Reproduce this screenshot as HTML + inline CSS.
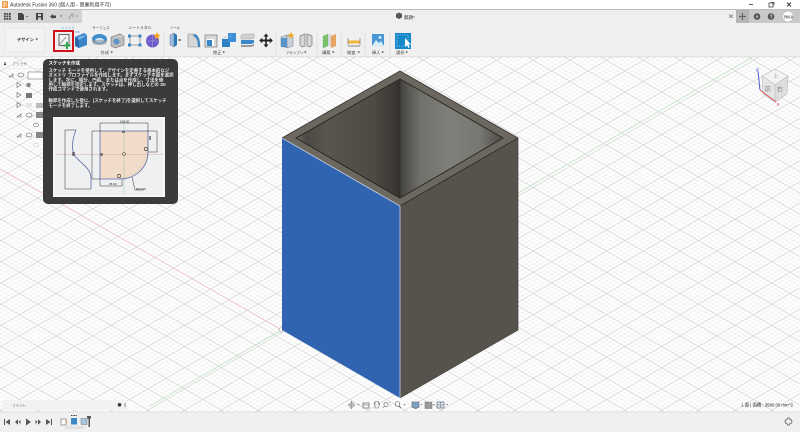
<!DOCTYPE html>
<html lang="ja">
<head>
<meta charset="utf-8">
<title>Autodesk Fusion 360</title>
<style>
html,body{margin:0;padding:0;width:800px;height:432px;overflow:hidden;background:#fff}
svg{display:block;filter:blur(.3px)}
text{font-family:"Liberation Sans","Noto Sans CJK JP",sans-serif;fill:#444}
</style>
</head>
<body>
<svg width="800" height="432" viewBox="0 0 800 432" xmlns="http://www.w3.org/2000/svg">
<defs>
<pattern id="mn" width="7.34" height="4.24" patternUnits="userSpaceOnUse" patternTransform="translate(588.3 261.7)">
<path d="M0 0L7.34 4.24M0 4.24L7.34 0" stroke="#eeeeee" stroke-width=".6" fill="none"/>
</pattern>
<pattern id="mj" width="36.7" height="21.2" patternUnits="userSpaceOnUse" patternTransform="translate(588.3 261.7)">
<path d="M0 0L36.7 21.2M0 21.2L36.7 0" stroke="#d2d2d2" stroke-width=".7" fill="none"/>
</pattern>
<linearGradient id="lw" x1="296" x2="400" y1="0" y2="0" gradientUnits="userSpaceOnUse">
<stop offset="0" stop-color="#6d6b65"/><stop offset=".1" stop-color="#4a4843"/><stop offset=".3" stop-color="#5a564e"/><stop offset=".75" stop-color="#4d4a44"/><stop offset="1" stop-color="#36332f"/>
</linearGradient>
<linearGradient id="rw" x1="400" x2="503" y1="0" y2="0" gradientUnits="userSpaceOnUse">
<stop offset="0" stop-color="#45433f"/><stop offset=".2" stop-color="#71716b"/><stop offset=".5" stop-color="#80807a"/><stop offset=".78" stop-color="#777771"/><stop offset=".95" stop-color="#55534e"/><stop offset="1" stop-color="#5a5852"/>
</linearGradient>
</defs>

<!-- canvas -->
<rect width="800" height="432" fill="#fff"/>
<rect y="57" width="800" height="355" fill="url(#mn)"/>
<rect y="57" width="800" height="355" fill="url(#mj)"/>
<path d="M0 169L282 330" stroke="#ecbcbc" stroke-width=".8"/>
<path d="M753 57L282 330L150 406" stroke="#c6e8c6" stroke-width=".8"/>
<rect x="279.500" y="327.500" width="4" height="4" fill="#fff" stroke="#aaa" stroke-width=".6" transform="rotate(45 281.500 329.500)"/>

<!-- box -->
<polygon points="282,138 400,206 400,398 282,330" fill="#3164b0"/>
<polygon points="518,138 518,330 400,398 400,206" fill="#56534c"/>
<polygon points="400,71 518,138 400,206 282,138" fill="#6c685f"/>
<polygon points="400,79 296,138 400,198" fill="url(#lw)"/>
<polygon points="400,79 503,138 400,198" fill="url(#rw)"/>
<path d="M400 79L296 138L400 198L503 138Z" fill="none" stroke="#25231f" stroke-width=".9"/>
<path d="M400 79V198" stroke="#2c2a27" stroke-width=".8"/>
<path d="M282 138L400 71L518 138" fill="none" stroke="#3a3833" stroke-width=".9"/>
<path d="M400 206L518 138" stroke="#2d2b27" stroke-width=".8"/>
<path d="M282 138L400 206V398" fill="none" stroke="#b8c6dc" stroke-width=".9"/>
<path d="M518 138V330L400 398" fill="none" stroke="#44413b" stroke-width=".7"/>

<!-- title bar -->
<rect width="800" height="9" fill="#fff"/>
<rect x="2" y="1" width="6" height="7" fill="#f29b45"/>
<text x="3.200" y="6.800" font-size="6" font-weight="700" style="fill:#fff">F</text>
<text x="10" y="6.500" font-size="5" style="fill:#333">Autodesk Fusion 360 (個人用 - 商業利用不可)</text>
<path d="M749 4.500H753" stroke="#444" stroke-width=".9"/>
<rect x="769" y="3" width="4" height="4" fill="none" stroke="#444" stroke-width=".8"/>
<path d="M771 2.300H774V5.300" fill="none" stroke="#444" stroke-width=".7"/>
<path d="M787 2.500L791 6.500M791 2.500L787 6.500" stroke="#333" stroke-width=".9"/>
<rect y="9" width="800" height="1.200" fill="#bdbdbd"/>

<!-- qat -->
<rect y="10" width="800" height="13" fill="#efefef"/>
<rect y="10" width="82" height="13" fill="#d3d3d3"/>
<rect x="736" y="10" width="64" height="13" fill="#c9c9c9"/>
<rect x="736" y="10" width="13" height="13" fill="#b5b5b5"/>
<g fill="#444">
<rect x="4" y="13" width="1.800" height="1.800"/><rect x="6.500" y="13" width="1.800" height="1.800"/><rect x="9" y="13" width="1.800" height="1.800"/>
<rect x="4" y="15.500" width="1.800" height="1.800"/><rect x="6.500" y="15.500" width="1.800" height="1.800"/><rect x="9" y="15.500" width="1.800" height="1.800"/>
<rect x="4" y="18" width="1.800" height="1.800"/><rect x="6.500" y="18" width="1.800" height="1.800"/><rect x="9" y="18" width="1.800" height="1.800"/>
<path d="M18 13h4l2 2v5h-6z"/><path d="M26 16l2 0-1 1.500z"/>
<path d="M36 13h7v7h-7z"/>
<path d="M50 16.500l3-2.500v1.500h3v2.500h-3v1z"/><path d="M60 15.500l2 0-1 1.500z"/>
</g>
<rect x="38" y="14" width="3" height="2" fill="#d3d3d3"/><rect x="38" y="17.500" width="3" height="2.500" fill="#d3d3d3"/>
<path d="M76 15.500l2 0-1 1.500z" fill="#888"/>
<path d="M69 19l1-2.500 2-2.500 1 0v3" stroke="#999" fill="none" stroke-width="1"/>

<!-- doc title -->
<path d="M396 14l3-1.500 3 1.500v3.500l-3 1.500-3-1.500z" fill="#555"/>
<text x="404" y="19" font-size="4.500" style="fill:#333">無題*</text>
<path d="M729 14.500l4 3.500M733 14.500l-4 3.500" stroke="#666" stroke-width=".7"/>
<path d="M742.500 13v7M739 16.500h7" stroke="#666" stroke-width="1.200"/>
<circle cx="757" cy="16.500" r="3.300" fill="#555"/><circle cx="757" cy="16.500" r="1.300" fill="#aaa"/>
<circle cx="771" cy="16.500" r="3.300" fill="#555"/><text x="769.700" y="18.500" font-size="5" font-weight="700" style="fill:#ddd">?</text>
<circle cx="788" cy="16.500" r="5" fill="#fff"/><text x="784.300" y="18.300" font-size="4.200" font-weight="700" style="fill:#555">RKA</text>

<!-- ribbon -->
<rect y="23" width="800" height="34" fill="#f0f0f0"/>
<rect y="56.500" width="800" height=".8" fill="#d8d8d8"/>
<rect x="5" y="28" width="40" height="24" fill="#f3f3f3" stroke="#e0e0e0" stroke-width=".6"/>
<text x="17" y="41" font-size="4.200" font-weight="700" style="fill:#333">デザイン</text>
<path d="M35.500 38.500h2.600l-1.300 1.800z" fill="#333"/>

<text x="68" y="29" font-size="3.500" text-anchor="middle" style="fill:#3d9bd6">ソリッド</text>
<path d="M75 32H80" stroke="#59a7dc" stroke-width=".8"/>
<text x="101" y="29" font-size="3.500" text-anchor="middle">サーフェス</text>
<text x="140" y="29" font-size="3.900" text-anchor="middle">シートメタル</text>
<text x="175" y="29" font-size="3.500" text-anchor="middle">ツール</text>

<g font-size="4.200">
<text x="100.500" y="54">作成</text><path d="M110.500 51.500h2.400l-1.200 1.700z" fill="#444"/>
<text x="213" y="54">修正</text><path d="M222.500 51.500h2.400l-1.200 1.700z" fill="#444"/>
<text x="286" y="54" font-size="3.500">アセンブリ</text><path d="M304 51.500h2.400l-1.200 1.700z" fill="#444"/>
<text x="322" y="54">構築</text><path d="M332 51.500h2.400l-1.200 1.700z" fill="#444"/>
<text x="347" y="54">検査</text><path d="M357.500 51.500h2.400l-1.200 1.700z" fill="#444"/>
<text x="372" y="54">挿入</text><path d="M381.500 51.500h2.400l-1.200 1.700z" fill="#444"/>
<text x="396" y="54">選択</text><path d="M405.500 51.500h2.400l-1.200 1.700z" fill="#444"/>
</g>
<g stroke="#dcdcdc" stroke-width=".8">
<path d="M164 33V55M276 33V55M317 33V55M341 33V55M365 33V55M390 33V55"/>
</g>

<!-- sketch -->
<rect x="54" y="31" width="19" height="20" fill="#eeeeee" stroke="#d0131b" stroke-width="2"/>
<rect x="59" y="34.500" width="10" height="11" fill="#f3f3f3" stroke="#555" stroke-width=".9"/>
<path d="M60 44l6-7" stroke="#777" stroke-width=".7"/>
<path d="M67 42v7M63.500 45.500h7" stroke="#2fa84a" stroke-width="2"/>

<!-- solid -->
<path d="M75 37l9-4 3 2v10l-8 3-4-2z" fill="#3b84c8"/><path d="M75 37l4 3v8l-4-2z" fill="#2a69a8"/><path d="M79 40l8-5-9 2z" fill="#7db9e8"/>
<!-- surface -->
<ellipse cx="99.500" cy="39" rx="7.500" ry="5" fill="#3e8ed0"/><ellipse cx="99.500" cy="40.500" rx="4.500" ry="2.500" fill="#cfe3f4"/><path d="M92 40v3c2 3 13 3 15 0v-3" fill="#8f8f8f" opacity=".5"/>
<path d="M111 37l9-3 4 2v9l-9 3-4-2z" fill="#bdbdbd" stroke="#777" stroke-width=".6"/><circle cx="116.500" cy="41.500" r="3" fill="#5b95c8"/><path d="M115 37.500l9-2" stroke="#eee" stroke-width=".6"/>
<!-- sheet -->
<rect x="130" y="36" width="10" height="9" fill="none" stroke="#888" stroke-width=".8"/>
<g fill="#3a88c9"><rect x="128" y="34.500" width="3" height="3"/><rect x="138.500" y="34.500" width="3" height="3"/><rect x="128" y="43.500" width="3" height="3"/><rect x="138.500" y="43.500" width="3" height="3"/></g>
<!-- purple -->
<circle cx="152.500" cy="41" r="6.500" fill="#6f5bc7"/><path d="M146 41h13M152.500 35v12" stroke="#a89be0" stroke-width=".6"/>
<path d="M157 32l1.200 2.500 2.500.5-2 1.700.5 2.500-2.200-1.200-2.200 1.200.5-2.500-2-1.700 2.500-.5z" fill="#f2a72b"/>

<!-- modify -->
<path d="M170 35l4-2v14l-4-2z" fill="#9dbfdc" stroke="#557" stroke-width=".4"/><path d="M174 33l3 2v10l-3 2z" fill="#2f79bd"/><path d="M178.500 40h2.500" stroke="#333" stroke-width="1.200"/>
<path d="M188 34h6c5 1 6 8 6 13h-12z" fill="#d5d5d5" stroke="#888" stroke-width=".6"/><path d="M194 34c5 1 6 8 6 13h-2c0-5-1-10-5-11z" fill="#3a88c9"/>
<rect x="205" y="35" width="12" height="12" fill="#d8d8d8" stroke="#777" stroke-width=".7"/><rect x="207" y="39" width="7" height="7" fill="#fff"/><rect x="207" y="40" width="5" height="6" fill="#3a88c9"/>
<rect x="222" y="39" width="8" height="8" fill="#2e7fc4"/><rect x="228" y="33" width="8" height="9" fill="#3a8fd6"/><path d="M222 39l3-2h6v-3" fill="none" stroke="#7db9e8" stroke-width=".6"/>
<path d="M241 35l3-1h10v4l-3 1h-10z" fill="#d0d0d0" stroke="#999" stroke-width=".4"/><path d="M241 40h13v3l-3 1h-10z" fill="#3a88c9"/><path d="M241 45h10l3-1v2l-3 1h-10z" fill="#999"/>
<path d="M266 33.500l2.500 3h-1.700v3h3v-1.700l3 2.700-3 2.700v-1.700h-3v3h1.700l-2.500 3-2.500-3h1.700v-3h-3v1.700l-3-2.700 3-2.700v1.700h3v-3h-1.700z" fill="#222"/>

<!-- assembly -->
<path d="M281 37l6-2 6 2v9l-6 2-6-2z" fill="#c8d2dc" stroke="#778" stroke-width=".5"/><path d="M287 35v13" stroke="#778" stroke-width=".5"/><rect x="281" y="38" width="6" height="9" fill="#3f86c6" opacity=".8"/>
<path d="M291 32l1 2.200 2.300.3-1.700 1.600.4 2.300-2-1.100-2 1.100.4-2.300-1.700-1.600 2.300-.3z" fill="#f2a72b"/>
<path d="M300 36l5-2v12l-3 1-2-2zM307 34l5 2v9l-2 2-3-1z" fill="#d6d6d6" stroke="#777" stroke-width=".7"/>
<!-- construct -->
<path d="M323 36l5-2v12l-5 2z" fill="#7fbf6a" stroke="#5b8" stroke-width=".3"/><path d="M331 36l5-2v12l-5 2z" fill="#e8a362"/>
<path d="M328 34h3v12h-3z" fill="#d8d8d8"/>
<!-- inspect -->
<rect x="348" y="40.500" width="12" height="3" fill="#f0b43a"/><path d="M348 38v7M360 38v7" stroke="#777" stroke-width=".7"/><path d="M348 46h12" stroke="#555" stroke-width=".7"/>
<!-- insert -->
<rect x="372" y="34" width="12" height="12" fill="#4a97d8"/><circle cx="380" cy="37.500" r="1.400" fill="#dff0fb"/><path d="M372 46l4-6 3 3 2-2 3 5z" fill="#d7ecf9"/>
<!-- select -->
<rect x="395" y="33" width="16" height="16" fill="#1688c9"/>
<rect x="397" y="35" width="11" height="11" fill="none" stroke="#a8dcf5" stroke-width=".6" stroke-dasharray="1.500 1"/>
<path d="M405 38v9l2-2 1.500 3 1.300-.7-1.400-2.800h2.600z" fill="#fff"/>

<!-- browser -->
<path d="M4 63h2M4 64.500h2" stroke="#333" stroke-width=".9"/>
<text x="12" y="65.500" font-size="3.800" style="fill:#777">ブラウザ</text>
<rect y="68" width="43" height=".5" fill="#e6e6e6"/>
<g stroke="#666" stroke-width=".6" fill="none">
<path d="M9 77l4-3v3zM17 117l4-3v3zM17 137l4-3v3z"/>
<ellipse cx="21" cy="75" rx="3" ry="2"/><ellipse cx="29" cy="115" rx="3" ry="2"/><ellipse cx="29" cy="135" rx="3" ry="2"/>
<ellipse cx="36" cy="125" rx="2.600" ry="1.800"/>
<path d="M17 82.500l4 2.500-4 2.500zM17 92.500l4 2.500-4 2.500zM17 102.500l4 2.500-4 2.500z"/>
</g>
<rect x="28" y="72" width="15" height="7" fill="#fff" stroke="#777" stroke-width=".6"/>
<circle cx="28.500" cy="85" r="2.300" fill="#888"/>
<rect x="26" y="93" width="6" height="5" fill="#777"/>
<rect x="36" y="103" width="7" height="5" fill="#bbb"/>
<rect x="26" y="103" width="6" height="4" fill="#e5e5e5"/>
<rect x="36" y="112" width="7" height="6" fill="#888"/>
<rect x="36" y="132" width="7" height="6" fill="#888"/>
<ellipse cx="36" cy="145" rx="2.600" ry="1.800" fill="none" stroke="#ccc" stroke-width=".6"/>

<!-- tooltip -->
<rect x="43" y="59" width="135" height="145" rx="5" fill="#3b3b3b"/>
<text x="48.500" y="64.500" font-size="4.500" font-weight="700" style="fill:#fff">スケッチを作成</text>
<g font-size="4.450" font-weight="700">
<text x="48.500" y="72" style="fill:#e8e8e8">スケッチ モードを使用して、デザインを定義する基本的なジ</text>
<text x="48.500" y="76.700" style="fill:#e8e8e8">オメトリ プロファイルを作成します。まずスケッチ平面を選択</text>
<text x="48.500" y="81.300" style="fill:#e8e8e8">します。次に、線分、円弧、または点を作成し、寸法を使</text>
<text x="48.500" y="86" style="fill:#e8e8e8">用して輪郭を指定します。スケッチは、押し出しなどの 3D</text>
<text x="48.500" y="90.600" style="fill:#e8e8e8">作成コマンドで使用されます。</text>
<text x="48.500" y="102" style="fill:#e8e8e8">輪郭を作成した後に、[スケッチを終了]を選択してスケッチ</text>
<text x="48.500" y="107" style="fill:#e8e8e8">モードを終了します。</text>
</g>
<rect x="53" y="117" width="112" height="80" fill="#f6f6f6"/>
<rect x="55" y="119" width="108" height="76" fill="#eef0f2"/>
<path d="M100 131H148V152C148 167 136 179 120 179H100Z" fill="#f1dcc9"/>
<path d="M55 154.500H163" stroke="#dba9a9" stroke-width=".6"/>
<path d="M124 119V195" stroke="#a8cfa8" stroke-width=".6"/>
<path d="M100 131H148V152C148 167 136 179 120 179H100Z" fill="none" stroke="#5b6aa8" stroke-width=".8"/>
<path d="M76 130C72 140 71 150 75 156C80 163 91 168 91 178V189" fill="none" stroke="#5b6aa8" stroke-width=".8"/>
<path d="M76 130H65V189H91" fill="none" stroke="#333" stroke-width=".5"/>
<path d="M100 131V123H148V131M100 131H92V179H100M148 131H157V152H148M100 179V186H122V179M132 177L135 190H144" fill="none" stroke="#333" stroke-width=".5"/>
<g font-size="3" style="fill:#222">
<text x="120" y="122.500" style="fill:#222">100.00</text><text x="136" y="190" style="fill:#222">R50.00</text>
<text x="109" y="185" style="fill:#222">25.00</text>
</g>
<circle cx="124" cy="154" r="1.500" fill="none" stroke="#333" stroke-width=".5"/>
<circle cx="119" cy="176" r="1.700" fill="none" stroke="#333" stroke-width=".6"/>
<circle cx="146" cy="149" r="1.700" fill="none" stroke="#333" stroke-width=".6"/>
<rect x="72" y="152" width="3" height="4" fill="#444" opacity=".6"/><rect x="100" y="153" width="3" height="3" fill="#444" opacity=".6"/><rect x="122" y="131" width="3" height="2" fill="#444" opacity=".6"/><rect x="149" y="136" width="2" height="4" fill="#444" opacity=".6"/>

<!-- viewcube -->
<path d="M775 69L788 76L775 85L762 76Z" fill="#f3f3f3" stroke="#bbb" stroke-width=".6"/>
<path d="M762 76L775 85V102L763 94Z" fill="#e6e6e6" stroke="#bbb" stroke-width=".6"/>
<path d="M788 76L775 85V102L787 94Z" fill="#dedede" stroke="#bbb" stroke-width=".6"/>
<text x="773" y="78" font-size="5.500" style="fill:#999">上</text>
<text x="764.500" y="91" font-size="6.500" style="fill:#888">前</text>
<text x="776.500" y="91" font-size="6.500" style="fill:#888">右</text>
<path d="M760 90L758 71" stroke="#4b5bd0" stroke-width="1"/>
<path d="M760 90L776 102" stroke="#d85b5b" stroke-width="1"/>
<text x="756" y="71" font-size="4.500" style="fill:#3a4bc0">Z</text>
<text x="776.500" y="106" font-size="4.500" style="fill:#d03a3a">X</text>

<!-- comments -->
<rect x="2" y="400" width="125" height="10" fill="#f2f2f2"/>
<text x="12" y="406.500" font-size="3.500" style="fill:#555">コメント</text>
<circle cx="119.500" cy="404.800" r="1.800" fill="#333"/>
<path d="M125 403v4" stroke="#888" stroke-width="1"/>

<!-- nav bar -->
<g fill="#666" stroke="#666">
<path d="M351.500 401.500l3 3.500-3 3.500-3-3.500z" fill="#cfd7df" stroke-width=".5"/><path d="M348 405h7M351.500 401v8" stroke-width=".4"/>
<path d="M357.500 404h2l-1 1.400z" stroke="none"/>
<rect x="363" y="403" width="6" height="5" fill="none" stroke-width=".7"/><path d="M363 405h6" stroke-width=".6"/>
<path d="M375 408v-3l-1-2 1 .5v-2h3.500v2l1-.5-.5 3-1 2z" fill="none" stroke-width=".6"/>
<circle cx="386" cy="404.500" r="2.100" fill="none" stroke-width=".6"/><path d="M384.500 406l-1.500 2" stroke-width=".6"/><path d="M389 403l1-1M390 405h1" stroke-width=".5"/>
<circle cx="397.500" cy="404" r="2.300" fill="none" stroke-width=".7"/><path d="M399 406l2 2" stroke-width=".9"/>
<path d="M403.500 404h2l-1 1.400z" stroke="none"/>
<rect x="412" y="402" width="7" height="5.500" fill="#7ba2c8" stroke="#666" stroke-width=".6"/><path d="M414 408.500h3" stroke-width=".7"/>
<path d="M420.500 404h2l-1 1.400z" stroke="none"/>
<rect x="425" y="402" width="7" height="6.500" fill="#9a9a9a" stroke="#777" stroke-width=".5"/>
<path d="M433 404h2l-1 1.400z" stroke="none"/>
<rect x="437" y="402" width="7" height="6" fill="#dbe6f0" stroke="#557" stroke-width=".6"/><path d="M437 405h7M440.500 402v6" stroke-width=".5"/>
<path d="M446 404h2l-1 1.400z" stroke="none"/>
</g>

<text x="793" y="406.500" font-size="4.300" text-anchor="end" style="fill:#222">1 面 | 面積 : 3580.00 mm^2</text>

<!-- timeline -->
<rect y="412" width="800" height="20" fill="#f0f0f0"/>
<rect y="411.500" width="800" height=".8" fill="#dcdcdc"/>
<g fill="#555">
<path d="M4 419h1v6h-1zM10 419v6l-4.500-3z"/>
<path d="M15 422l3-2.700v5.400zM18.500 422l2-2v4z"/>
<path d="M26 418.500l5 3.500-5 3.500z"/>
<path d="M41 422l-3-2.700v5.400zM37.500 422l-2-2v4z"/>
<path d="M46 419v6l4.500-3zM51 419h1v6h-1z"/>
</g>
<rect x="61" y="419" width="5" height="6" fill="#fff" stroke="#666" stroke-width=".6"/>
<path d="M66 423l1-2" stroke="#e58a2d" stroke-width="1"/>
<rect x="71" y="418" width="6" height="6.500" fill="#3a88c9"/>
<path d="M71 415.500h6" stroke="#333" stroke-width="1" stroke-dasharray="1 .6"/>
<rect x="81" y="418.500" width="6" height="6" fill="#a9c6e0" stroke="#777" stroke-width=".5"/>
<rect x="65" y="426" width="19" height="3" fill="#e2e2e2"/>
<path d="M87 416h4v2l-1 1v8h-1.500v-8l-1.500-1z" fill="#555"/>

<path d="M785 421.500l.6-1.600 1.400-.4.6-1.500h1.800l.6 1.500 1.400.4.6 1.600-.6 1.600-1.400.4-.6 1.500h-1.800l-.6-1.500-1.400-.4z" fill="none" stroke="#777" stroke-width="1"/>
</svg>
</body>
</html>
